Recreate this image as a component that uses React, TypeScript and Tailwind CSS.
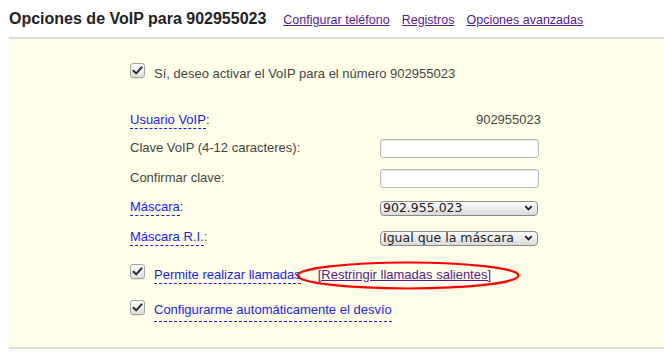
import React from 'react';

const Check: React.FC = () => (
  <span className="flex h-[15px] w-[15px] shrink-0 items-center justify-center rounded-[3px] border border-[#a4a4a4] bg-gradient-to-b from-white to-[#dedede] shadow-[0_1px_0_rgba(0,0,0,0.08)]">
    <svg width="11" height="11" viewBox="0 0 11 11">
      <path d="M1.5 5.8 L4.2 8.4 L9.6 2.4" fill="none" stroke="#2a2a2a" strokeWidth="2" strokeLinecap="round" strokeLinejoin="round" />
    </svg>
  </span>
);

const Term: React.FC<{ children: React.ReactNode }> = ({ children }) => (
  <span className="border-b border-dashed border-[#1c1ce6] pb-px text-[#1c1ce6]">{children}</span>
);

const FakeSelect: React.FC<{ value: string }> = ({ value }) => (
  <div className="flex h-[15px] w-[158px] items-center justify-between rounded-[4px] border border-[#8c8c8c] bg-gradient-to-b from-[#fdfdfd] to-[#dadada] pl-[2px] pr-[4px] text-[12.5px] leading-none text-[#222] [font-family:'DejaVu_Sans',sans-serif]">
    <span>{value}</span>
    <svg width="9" height="6" viewBox="0 0 9 6">
      <path d="M1.2 1.2 L4.5 4.5 L7.8 1.2" fill="none" stroke="#222" strokeWidth="1.8" />
    </svg>
  </div>
);

const TextBox: React.FC = () => (
  <input
    type="password"
    className="h-[19px] w-[159px] rounded-[3px] border border-[#b9b9b9] bg-white shadow-[inset_0_1px_2px_rgba(0,0,0,0.12)] outline-none"
  />
);

export default function App() {
  return (
    <div className="h-[359px] w-[664px] overflow-hidden bg-white text-[13px] text-[#444] [font-family:'Liberation_Sans',Arial,sans-serif]">
      <div className="flex h-[37px] items-baseline pl-[9px] pt-[9px]">
        <h1 className="text-[16px] font-bold leading-[20px] text-[#222]">Opciones de VoIP para 902955023</h1>
        <nav className="ml-[17px] flex gap-[12px] text-[12.5px] text-[#551a8b]">
          <a className="underline" href="#">Configurar teléfono</a>
          <a className="underline" href="#">Registros</a>
          <a className="underline" href="#">Opciones avanzadas</a>
        </nav>
      </div>

      <div className="ml-[9px] border-y-2 border-[#dddddd] bg-[#ffffea] pb-[27px] pl-[121px] pt-[25px]">
        <div className="w-[411px] leading-[20px]">
          <div className="flex h-[20px] items-start gap-[9px]">
            <span className="-mt-px"><Check /></span>
            <span>Sí, deseo activar el VoIP para el número 902955023</span>
          </div>

          <div className="mt-[26px] flex h-[20px] items-center justify-between">
            <span><Term>Usuario VoIP</Term>:</span>
            <span>902955023</span>
          </div>

          <div className="mt-[8px] flex h-[20px] items-center justify-between">
            <span>Clave VoIP (4-12 caracteres):</span>
            <span className="mr-[2px] flex"><TextBox /></span>
          </div>

          <div className="mt-[10px] flex h-[20px] items-center justify-between">
            <span>Confirmar clave:</span>
            <span className="mr-[2px] flex"><TextBox /></span>
          </div>

          <div className="mt-[9px] flex h-[20px] items-center justify-between">
            <span><Term>Máscara</Term>:</span>
            <span className="mr-[3px] mt-[2px] flex"><FakeSelect value="902.955.023" /></span>
          </div>

          <div className="mt-[10px] flex h-[20px] items-center justify-between">
            <span><Term>Máscara R.I.</Term>:</span>
            <span className="mr-[3px] mt-[2px] flex"><FakeSelect value="Igual que la máscara" /></span>
          </div>

          <div className="mt-[18px] flex h-[20px] items-start gap-[9px]">
            <span className="-mt-px"><Check /></span>
            <span className="whitespace-nowrap">
              <Term>Permite realizar llamadas</Term>
              <span className="relative ml-[17px]">
                <a className="text-[#551a8b] underline" href="#">[Restringir llamadas salientes]</a>
                <svg className="pointer-events-none absolute left-[-22px] top-[-6px]" width="224" height="29" viewBox="0 0 224 29">
                  <ellipse cx="112" cy="14.5" rx="110.5" ry="13" fill="none" stroke="#ff0000" strokeWidth="2.2" />
                </svg>
              </span>
            </span>
          </div>

          <div className="mt-[15px] flex h-[20px] items-start gap-[9px]">
            <span><Check /></span>
            <Term>Configurarme automáticamente el desvío</Term>
          </div>
        </div>
      </div>
    </div>
  );
}
